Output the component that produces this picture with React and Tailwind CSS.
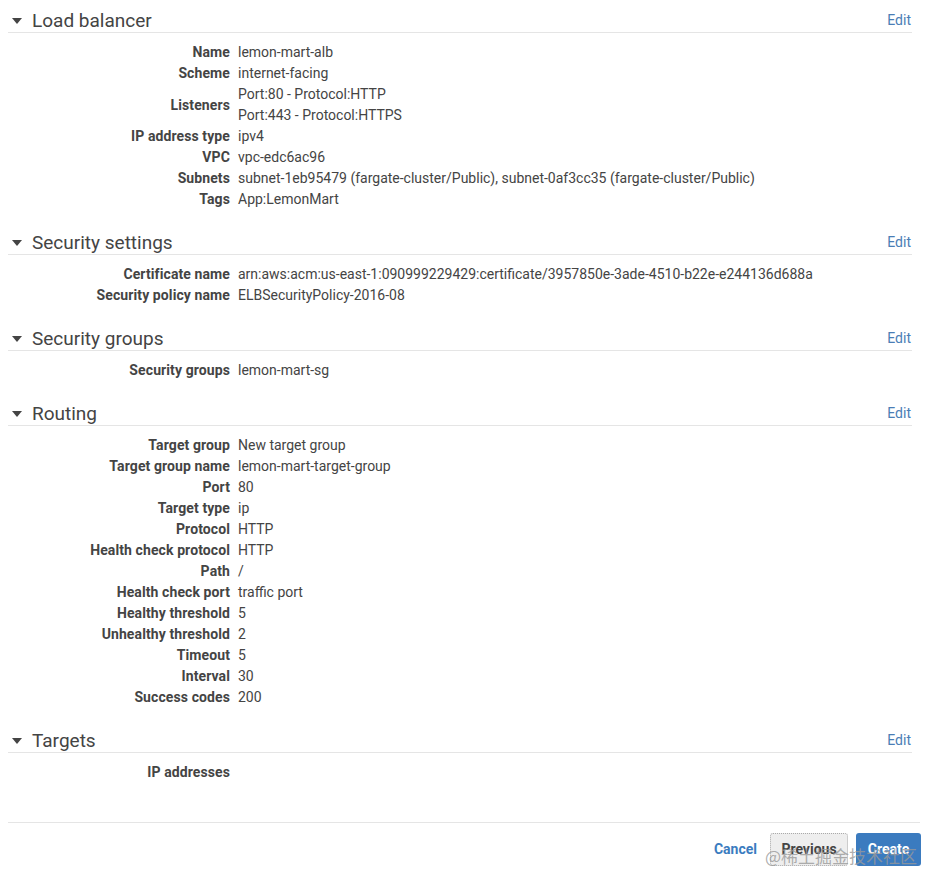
import React from "react";

const sections = [
  {
    title: "Load balancer",
    rows: [
      ["Name", ["lemon-mart-alb"]],
      ["Scheme", ["internet-facing"]],
      ["Listeners", ["Port:80 - Protocol:HTTP", "Port:443 - Protocol:HTTPS"]],
      ["IP address type", ["ipv4"]],
      ["VPC", ["vpc-edc6ac96"]],
      ["Subnets", ["subnet-1eb95479 (fargate-cluster/Public), subnet-0af3cc35 (fargate-cluster/Public)"]],
      ["Tags", ["App:LemonMart"]],
    ],
  },
  {
    title: "Security settings",
    rows: [
      ["Certificate name", ["arn:aws:acm:us-east-1:090999229429:certificate/3957850e-3ade-4510-b22e-e244136d688a"]],
      ["Security policy name", ["ELBSecurityPolicy-2016-08"]],
    ],
  },
  {
    title: "Security groups",
    rows: [["Security groups", ["lemon-mart-sg"]]],
  },
  {
    title: "Routing",
    rows: [
      ["Target group", ["New target group"]],
      ["Target group name", ["lemon-mart-target-group"]],
      ["Port", ["80"]],
      ["Target type", ["ip"]],
      ["Protocol", ["HTTP"]],
      ["Health check protocol", ["HTTP"]],
      ["Path", ["/"]],
      ["Health check port", ["traffic port"]],
      ["Healthy threshold", ["5"]],
      ["Unhealthy threshold", ["2"]],
      ["Timeout", ["5"]],
      ["Interval", ["30"]],
      ["Success codes", ["200"]],
    ],
  },
  {
    title: "Targets",
    rows: [["IP addresses", []]],
  },
];

function Section({ title, rows, last }) {
  return (
    <div className={last ? "" : "mb-[21px]"}>
      <div className="flex h-6 items-center justify-between border-b border-[#e5e5e5]">
        <div className="flex items-center">
          <svg width="24" height="8" viewBox="0 0 24 8">
            <polygon points="4,1 14,1 9,7" fill="#444" />
          </svg>
          <span className="text-[19px] leading-6 text-[#444]">{title}</span>
        </div>
        <a className="text-[14px] text-[#4a7db5] pr-[1px]">Edit</a>
      </div>
      <div className="pt-[9px]">
        {rows.map(([label, values]) => (
          <div key={label} className="flex items-center">
            <div className="w-[222px] shrink-0 text-right font-bold text-[14px] leading-[21px] tracking-[0.1px] text-[#444]">
              {label}
            </div>
            <div className="ml-2 text-[14px] leading-[21px] text-[#444]">
              {values.length === 0 ? <span>&nbsp;</span> : values.map((v) => <div key={v}>{v}</div>)}
            </div>
          </div>
        ))}
      </div>
    </div>
  );
}

export default function App() {
  return (
    <div
      className="relative w-[931px] h-[875px] bg-white overflow-hidden"
      style={{ fontFamily: "Roboto, 'Liberation Sans', sans-serif" }}
    >
      <div className="pt-[9px] pl-2 w-[912px]">
        {sections.map((s, i) => (
          <Section key={s.title} {...s} last={i === sections.length - 1} />
        ))}
      </div>
      <div className="ml-2 mt-[39px] w-[912px] border-t border-[#e5e5e5]" />
      <div className="flex items-center justify-end pr-[10px] pt-[10px]">
        <a className="font-bold text-[14px] text-[#3b7cc0] mr-[13px]">Cancel</a>
        <button className="h-[33px] w-[78px] rounded-[3px] border border-dotted border-[#aaa] bg-[#eeeeee] font-bold text-[14px] text-[#444] mr-2">
          Previous
        </button>
        <button className="h-[33px] w-[65px] rounded-[3px] bg-[#3b7bbf] font-bold text-[14px] text-white">
          Create
        </button>
      </div>
      <div
        className="absolute left-[765px] top-[846px] text-[17px] text-[#999]/80 leading-5 whitespace-nowrap"
        style={{ fontFamily: "'Noto Sans CJK SC', sans-serif" }}
      >
        @稀土掘金技术社区
      </div>
    </div>
  );
}
